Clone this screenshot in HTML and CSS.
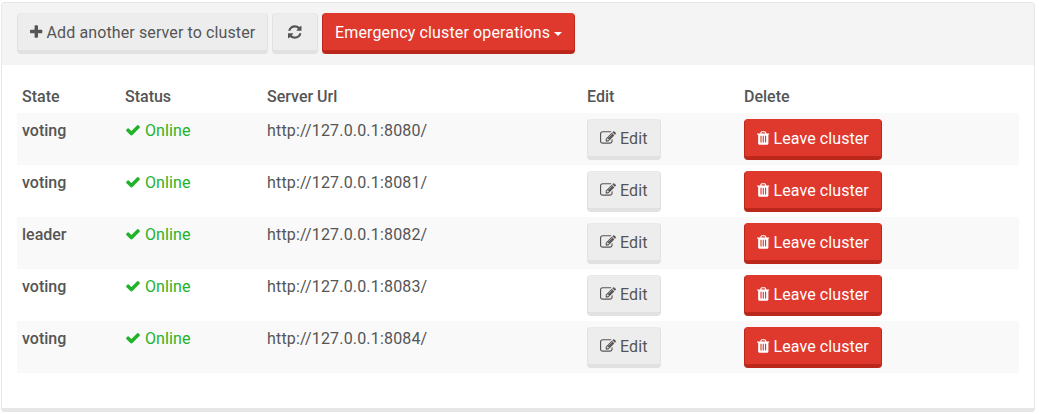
FILE: index.html
```html
<!DOCTYPE html>
<html lang="en">
<head>
<meta charset="utf-8">
<title>Cluster</title>
<link rel="stylesheet" href="styles.css">
</head>
<body>
<svg class="sprite" aria-hidden="true">
  <symbol id="plus" viewBox="192 0 1408 1792"><path d="M1600 736v192q0 40-28 68t-68 28h-416v416q0 40-28 68t-68 28h-192q-40 0-68-28t-28-68v-416h-416q-40 0-68-28t-28-68v-192q0-40 28-68t68-28h416v-416q0-40 28-68t68-28h192q40 0 68 28t28 68v416h416q40 0 68 28t28 68z"/></symbol>
  <symbol id="refresh" viewBox="128 0 1536 1792"><path d="M1639 1056q0 5-1 7-64 268-268 434.500t-478 166.500q-146 0-282.500-55t-243.500-157l-129 129q-19 19-45 19t-45-19-19-45v-448q0-26 19-45t45-19h448q26 0 45 19t19 45-19 45l-137 137q71 66 161 102t187 36q134 0 250-65t186-179q11-17 53-117 8-23 30-23h192q13 0 22.500 9.500t9.500 22.500zm25-800v448q0 26-19 45t-45 19h-448q-26 0-45-19t-19-45 19-45l138-138q-148-137-349-137-134 0-250 65t-186 179q-11 17-53 117-8 23-30 23h-199q-13 0-22.500-9.500t-9.500-22.500v-7q65-268 270-434.500t480-166.500q146 0 284 55.500t245 156.500l130-129q19-19 45-19t45 19 19 45z"/></symbol>
  <symbol id="check" viewBox="0 0 1792 1792"><path d="M1671 566q0 40-28 68l-724 724-136 136q-28 28-68 28t-68-28l-136-136-362-362q-28-28-28-68t28-68l136-136q28-28 68-28t68 28l294 295 656-657q28-28 68-28t68 28l136 136q28 28 28 68z"/></symbol>
  <symbol id="edit" viewBox="0 0 1792 1792"><path d="M888 1184l116-116-152-152-116 116v56h96v96h56zm440-720q-16-16-33 1l-350 350q-17 17-1 33t33-1l350-350q17-17 1-33zm80 594v190q0 119-84.500 203.500t-203.500 84.500h-832q-119 0-203.500-84.500t-84.500-203.500v-832q0-119 84.500-203.500t203.500-84.500h832q63 0 117 25 15 7 18 23 3 17-9 29l-49 49q-14 14-32 8-23-6-45-6h-832q-66 0-113 47t-47 113v832q0 66 47 113t113 47h832q66 0 113-47t47-113v-126q0-13 9-22l64-64q15-15 35-7t20 29zm-96-738l288 288-672 672h-288v-288zm444 132l-92 92-288-288 92-92q28-28 68-28t68 28l152 152q28 28 28 68t-28 68z"/></symbol>
  <symbol id="trash" viewBox="192 0 1408 1792"><path d="M704 1376v-704q0-14-9-23t-23-9h-64q-14 0-23 9t-9 23v704q0 14 9 23t23 9h64q14 0 23-9t9-23zm256 0v-704q0-14-9-23t-23-9h-64q-14 0-23 9t-9 23v704q0 14 9 23t23 9h64q14 0 23-9t9-23zm256 0v-704q0-14-9-23t-23-9h-64q-14 0-23 9t-9 23v704q0 14 9 23t23 9h64q14 0 23-9t9-23zm-544-992h448l-48-117q-7-9-17-11h-317q-10 2-17 11zm928 32v64q0 14-9 23t-23 9h-96v948q0 83-47 143.500t-113 60.500h-832q-66 0-113-58.500t-47-141.500v-952h-96q-14 0-23-9t-9-23v-64q0-14 9-23t23-9h309l70-167q15-37 54-63t79-26h320q40 0 79 26t54 63l70 167h309q14 0 23 9t9 23z"/></symbol>
</svg>
<section class="panel">
  <header class="toolbar">
    <button class="btn btn-add"><svg class="icon narrow"><use href="#plus"/></svg>Add another server to cluster</button>
    <button class="btn btn-refresh" aria-label="Refresh"><svg class="icon medium"><use href="#refresh"/></svg></button>
    <button class="btn danger btn-emergency">Emergency cluster operations<span class="caret"></span></button>
  </header>
  <div class="servers">
    <div class="row head"><div>State</div><div>Status</div><div>Server Url</div><div>Edit</div><div>Delete</div></div>
    <div class="row"><div class="state">voting</div><div class="online"><svg class="icon"><use href="#check"/></svg>Online</div><div class="url">http://127.0.0.1:8080/</div><div><button class="btn btn-edit"><svg class="icon"><use href="#edit"/></svg>Edit</button></div><div><button class="btn danger btn-leave"><svg class="icon narrow"><use href="#trash"/></svg>Leave cluster</button></div></div>
    <div class="row"><div class="state">voting</div><div class="online"><svg class="icon"><use href="#check"/></svg>Online</div><div class="url">http://127.0.0.1:8081/</div><div><button class="btn btn-edit"><svg class="icon"><use href="#edit"/></svg>Edit</button></div><div><button class="btn danger btn-leave"><svg class="icon narrow"><use href="#trash"/></svg>Leave cluster</button></div></div>
    <div class="row"><div class="state">leader</div><div class="online"><svg class="icon"><use href="#check"/></svg>Online</div><div class="url">http://127.0.0.1:8082/</div><div><button class="btn btn-edit"><svg class="icon"><use href="#edit"/></svg>Edit</button></div><div><button class="btn danger btn-leave"><svg class="icon narrow"><use href="#trash"/></svg>Leave cluster</button></div></div>
    <div class="row"><div class="state">voting</div><div class="online"><svg class="icon"><use href="#check"/></svg>Online</div><div class="url">http://127.0.0.1:8083/</div><div><button class="btn btn-edit"><svg class="icon"><use href="#edit"/></svg>Edit</button></div><div><button class="btn danger btn-leave"><svg class="icon narrow"><use href="#trash"/></svg>Leave cluster</button></div></div>
    <div class="row"><div class="state">voting</div><div class="online"><svg class="icon"><use href="#check"/></svg>Online</div><div class="url">http://127.0.0.1:8084/</div><div><button class="btn btn-edit"><svg class="icon"><use href="#edit"/></svg>Edit</button></div><div><button class="btn danger btn-leave"><svg class="icon narrow"><use href="#trash"/></svg>Leave cluster</button></div></div>
  </div>
</section>
</body>
</html>
```

FILE: styles.css
```css
* { box-sizing: border-box; }

body {
  margin: 0;
  padding: 2px 4px 2px 1px;
  background: #fff;
  color: #555;
  font: 16px/24px Roboto, sans-serif;
}

.sprite { display: none; }

.panel {
  height: 410px;
  border: 1px solid #e6e6e6;
  border-bottom-width: 4px;
  border-radius: 4px;
}

.toolbar {
  display: flex;
  gap: 4px;
  height: 62px;
  padding: 10px 15px;
  background: #f4f4f4;
  border-radius: 3px 3px 0 0;
}

.btn {
  display: flex;
  align-items: center;
  height: 41px;
  padding: 1px 12px 0;
  border: 1px solid #e1e1e1;
  border-top-color: #e9e9e9;
  border-bottom-width: 4px;
  border-radius: 4px;
  background: #ededed;
  color: #555;
  font: inherit;
  white-space: nowrap;
}

.danger {
  background: #df382c;
  border-color: #bc271c;
  border-top-color: #df382c;
  color: #fff;
}

.btn-add { width: 251px; letter-spacing: 0.11px; }
.btn-refresh { width: 46px; padding-left: 15px; }
.btn-emergency { width: 253px; letter-spacing: 0.14px; }
.btn-edit { width: 74px; letter-spacing: 0.15px; }
.btn-leave { width: 138px; letter-spacing: 0.08px; }

.icon {
  flex: none;
  width: 16px;
  height: 16px;
  margin: 0 4px 2px 0;
  fill: currentColor;
}
.icon.narrow { width: 12.57px; }
.icon.medium { width: 13.71px; margin-right: 0; }

.caret {
  margin: 2px 0 0 4px;
  border: 4px solid transparent;
  border-top-color: currentColor;
  border-bottom: 0;
}

.servers { padding: 16px 15px 0; }

.row {
  display: grid;
  grid-template-columns: 103px 142px 320px 157px 1fr;
  height: 52px;
  padding-top: 6px;
}
.row > div { padding-left: 5px; }
.row:nth-child(even) { background: #f9f9f9; }

.row.head {
  height: 32px;
  padding-top: 4px;
  font-weight: 500;
}

.state { font-weight: 500; }
.url { letter-spacing: 0.17px; }

.online {
  display: flex;
  align-items: center;
  height: 24px;
  color: #22b22c;
  letter-spacing: 0.1px;
}
```
